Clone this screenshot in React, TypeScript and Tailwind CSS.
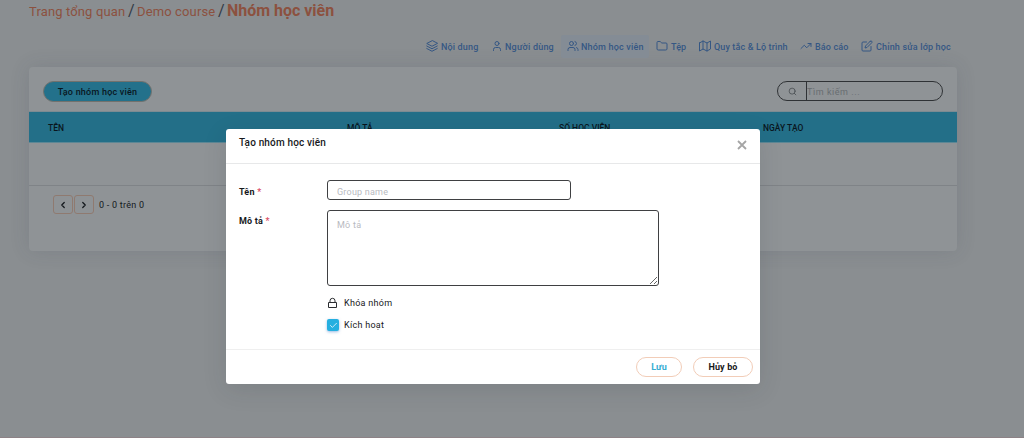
import React from "react";
import {
  LuUser,
  LuUsers,
  LuFolder,
  LuTrendingUp,
  LuSearch,
  LuChevronLeft,
  LuChevronRight,
} from "react-icons/lu";
import { FiEdit, FiCheck, FiMap } from "react-icons/fi";

function LayersIcon() {
  return (
    <svg viewBox="0 0 24 24" className="size-full" fill="none" stroke="currentColor" strokeWidth="2" strokeLinejoin="round" strokeLinecap="round">
      <path d="M12 1.5 1.5 7 12 12.5 22.5 7zM1.5 12 12 17.5 22.5 12M1.5 17 12 22.5 22.5 17" />
    </svg>
  );
}

const tabs = [
  { label: "Nội dung", icon: <LayersIcon />, box: "ml-[426px] w-[65px]", text: "ml-[3px] tracking-[0.15px]" },
  { label: "Người dùng", icon: <LuUser className="size-full" />, box: "w-[70px]", text: "ml-[2px] tracking-[0.2px]" },
  { label: "Nhóm học viên", icon: <LuUsers className="size-full" />, box: "w-[88px] bg-[#848c95] pl-[6px]", text: "ml-[2px] tracking-[0.19px]" },
  { label: "Tệp", icon: <LuFolder className="size-full" />, box: "ml-[7px] w-[43px]", text: "ml-[3px]" },
  { label: "Quy tắc & Lộ trình", icon: <FiMap className="size-full" />, box: "w-[101px]", text: "ml-[3px] tracking-[0.13px]" },
  { label: "Báo cáo", icon: <LuTrendingUp className="size-full" />, box: "w-[61px]", text: "ml-[3px] tracking-[0.15px]" },
  { label: "Chỉnh sửa lớp học", icon: <FiEdit className="size-full" />, box: "", text: "ml-[3px] tracking-[0.15px]" },
];

function Breadcrumb() {
  return (
    <nav className="flex h-[22px] items-center whitespace-nowrap pl-[29px] text-[13px] text-[#8c513f]">
      <span className="w-[99px] pt-[2px] tracking-[0.13px]">Trang tổng quan</span>
      <span className="w-[9px] text-[16px] leading-none text-[#343b46]">/</span>
      <span className="w-[81px] pt-[2px] tracking-[0.13px]">Demo course</span>
      <span className="w-[9px] text-[16px] leading-none text-[#343b46]">/</span>
      <span className="text-[16px] font-bold tracking-[-0.02px]">Nhóm học viên</span>
    </nav>
  );
}

function Tabs() {
  return (
    <nav className="mt-[13px] flex h-[23px] whitespace-nowrap text-[9px] font-medium tracking-[0.1px] text-[#355784]">
      {tabs.map((t) => (
        <a key={t.label} className={"flex h-[23px] shrink-0 items-center rounded-[2px] " + t.box}>
          <span className="relative -top-px size-[12px] shrink-0">{t.icon}</span>
          <span className={"relative top-px " + t.text}>{t.label}</span>
        </a>
      ))}
    </nav>
  );
}

function GroupTable() {
  return (
    <section className="ml-[29px] mt-[9px] h-[184px] w-[928px] rounded-[4px] bg-[#8f9396] text-[9px] text-[#14191d] shadow-[0_0_20px_rgba(50,60,75,0.14)]">
      <div className="flex h-[45px] items-start justify-between border-b border-[#7c8b92] pl-[14px] pr-[14px] pt-[14px]">
        <button className="flex h-[21px] w-[109px] items-center justify-center rounded-full border border-[#72716d] bg-[#23718b] pt-[2px] font-medium tracking-[0.22px] text-[#09171f]">
          Tạo nhóm học viên
        </button>
        <div className="flex h-[20px] w-[166px] overflow-hidden rounded-full border border-[#2f3235] text-[#686d71]">
          <span className="flex w-[29px] items-center justify-center border-r border-[#2f3235] pt-px text-[#44494e]">
            <LuSearch className="size-[9px]" />
          </span>
          <span className="flex items-center pt-[3px] text-[9px] tracking-[0.55px]">Tìm kiếm ...</span>
        </div>
      </div>
      <div className="flex h-[31px] items-center whitespace-nowrap border-b border-[#5d8795] bg-[#236f88] pl-[19px] pt-[2px] text-[8.5px] font-medium text-[#0a161d]">
        <span className="w-[299px]">TÊN</span>
        <span className="w-[212px]">MÔ TẢ</span>
        <span className="w-[204px]">SỐ HỌC VIÊN</span>
        <span>NGÀY TẠO</span>
      </div>
      <div className="h-[43px] border-b border-[#7f8387]" />
      <div className="mt-[9px] flex h-[19px] items-center pl-[24px]">
        <span className="flex h-[19px] w-[20px] items-center justify-center rounded-[3px] border border-[#8f7a70]">
          <LuChevronLeft className="size-[10px]" strokeWidth={3} />
        </span>
        <span className="ml-px flex h-[19px] w-[20px] items-center justify-center rounded-[3px] border border-[#8f7a70]">
          <LuChevronRight className="size-[10px]" strokeWidth={3} />
        </span>
        <span className="ml-[5px] pt-[2px] tracking-[0.25px]">0 - 0 trên 0</span>
      </div>
    </section>
  );
}

function Label({ children }: { children: React.ReactNode }) {
  return (
    <label className="block text-[9px] font-bold leading-[11px] tracking-[0.2px]">
      {children} <span className="font-medium text-[#d9485f]">*</span>
    </label>
  );
}

function GroupDialog() {
  return (
    <div role="dialog" className="absolute left-[226px] top-[129px] flex h-[255px] w-[534px] flex-col rounded-[3px] bg-white text-[9px] text-[#17191c] shadow-[0_6px_24px_rgba(30,40,50,0.12)]">
      <header className="flex h-[35px] items-start justify-between border-b border-[#e7e8e9] px-[13px]">
        <h2 className="mt-[8px] text-[10px] font-medium leading-[12px] tracking-[0.16px]">Tạo nhóm học viên</h2>
        <svg viewBox="0 0 10 10" className="mt-[11px] size-[10px]" stroke="#a5a5a5" strokeWidth="1.8">
          <path d="M1 1l8 8M9 1L1 9" />
        </svg>
      </header>
      <form className="grid h-[186px] grid-cols-[88px_1fr] grid-rows-[30px_76px_auto] border-b border-[#efefef] pl-[13px] pt-[16px]">
        <div className="pt-[7px]"><Label>Tên</Label></div>
        <input placeholder="Group name" className="h-[20px] w-[244px] rounded-[3px] border border-[#3f4042] px-[9px] pt-[3px] tracking-[0.22px] placeholder:text-[#b8babf]" />
        <div className="pt-[6px]"><Label>Mô tả</Label></div>
        <textarea placeholder="Mô tả" className="h-[76px] w-[332px] rounded-[3px] border border-[#3f4042] px-[9px] pt-[8px] tracking-[0.25px] placeholder:text-[#b8babf]" />
        <div className="col-start-2 pt-[11px] tracking-[0.28px]">
          <div className="flex h-[12px] items-center">
            <svg viewBox="0 0 12 12" className="size-[12px]" fill="none" stroke="#2b2d30" strokeWidth="1">
              <path d="M1.5 5.5h8v5h-8zM3 5.5V3.8a2.5 2.5 0 0 1 5 0v1.7" />
            </svg>
            <span className="ml-[5px] pt-[2px]">Khóa nhóm</span>
          </div>
          <div className="mt-[10px] flex h-[12px] items-center">
            <span className="flex size-[12px] items-center justify-center rounded-[2px] bg-[#25afe0] text-white shadow-[0_1px_3px_rgba(60,120,200,0.5)]">
              <FiCheck className="size-[9px]" />
            </span>
            <span className="ml-[5px] pt-[2px]">Kích hoạt</span>
          </div>
        </div>
      </form>
      <footer className="flex justify-end pr-[7px] pt-[7px] font-bold">
        <button className="h-[20px] w-[46px] rounded-full border border-[#f2cdb8] pt-px tracking-[0.15px] text-[#36add2]">Lưu</button>
        <button className="ml-[11px] h-[20px] w-[60px] rounded-full border border-[#f2cdb8] pt-px tracking-[0.15px]">Hủy bỏ</button>
      </footer>
    </div>
  );
}

export default function App() {
  return (
    <main className="relative h-[438px] w-[1024px] overflow-hidden border-b border-[#8d8286] bg-[#8a8e91] font-['Roboto',sans-serif]">
      <Breadcrumb />
      <Tabs />
      <GroupTable />
      <GroupDialog />
    </main>
  );
}
